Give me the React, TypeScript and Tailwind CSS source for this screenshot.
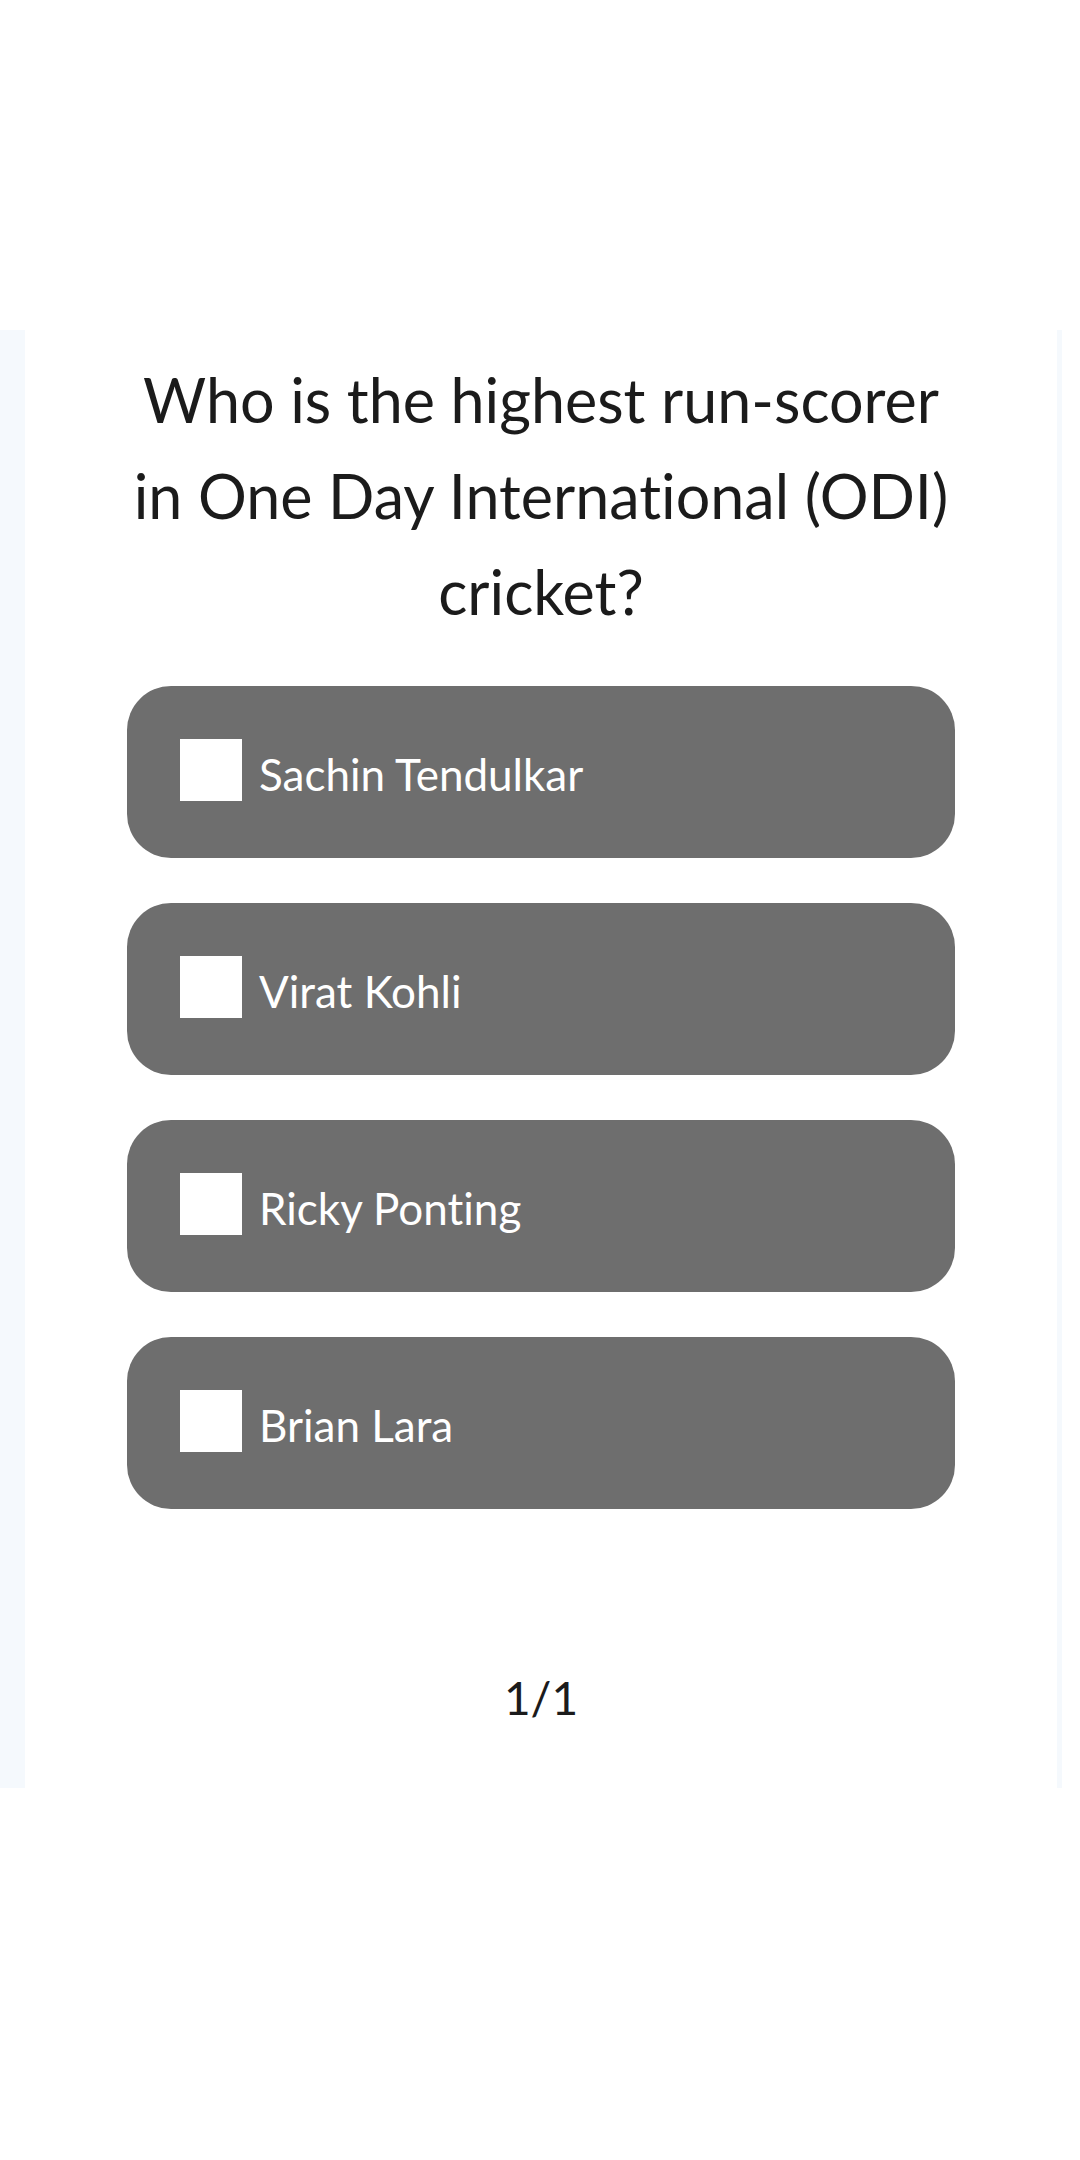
import React from "react";

const options = ["Sachin Tendulkar", "Virat Kohli", "Ricky Ponting", "Brian Lara"];

export default function App() {
  return (
    <div
      className="w-[1080px] min-h-[2160px] bg-white [font-variant-ligatures:none]"
      style={{ fontFamily: "Lato, 'Open Sans', sans-serif" }}
    >
      <div className="h-[330px]" />
      <div className="flex h-[1458px]">
        <div className="w-[25px] bg-[#f5f9fd]" />
        <div className="flex w-[1032px] flex-col items-center bg-white pt-[22px]">
          <h1 className="w-[840px] text-center text-[61px] font-normal leading-[96px] text-[#1b1b1b]">
            Who is the highest run-scorer in One Day International (ODI) cricket?
          </h1>
          <div className="mt-[46px] flex w-[828px] flex-col gap-[45px]">
            {options.map((o) => (
              <div
                key={o}
                className="flex h-[172px] items-center rounded-[44px] bg-[#6e6e6e] pl-[53px]"
              >
                <div className="mb-[5px] h-[62px] w-[62px] bg-white" />
                <span className="ml-[17px] pt-[4px] text-[44px] leading-none text-white">{o}</span>
              </div>
            ))}
          </div>
          <div className="mt-[155px] text-[46px] leading-[68px] text-[#1b1b1b]">1/1</div>
        </div>
        <div className="w-[5px] bg-[#f5f9fd]" />
        <div className="flex-1 bg-white" />
      </div>
    </div>
  );
}
